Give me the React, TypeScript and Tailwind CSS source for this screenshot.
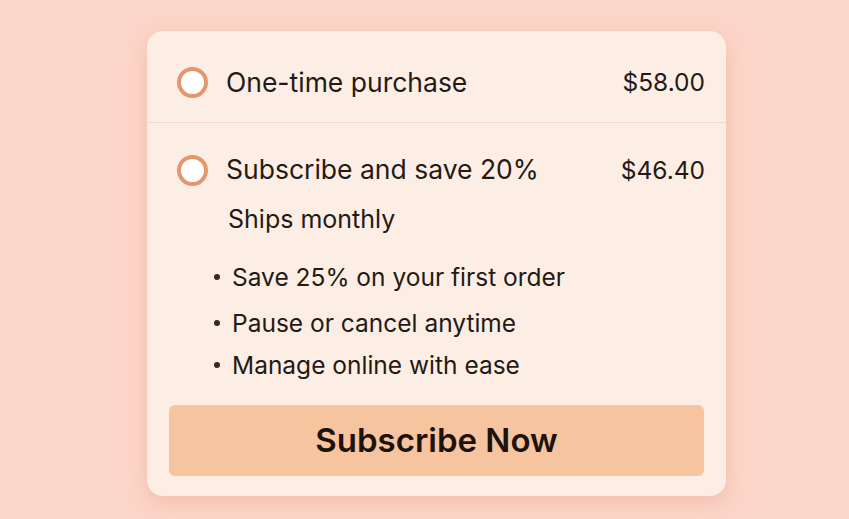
export default function App() {
  const perks = [
    { text: "Save 25% on your first order", gap: "mt-0" },
    { text: "Pause or cancel anytime", gap: "mt-[14px]" },
    { text: "Manage online with ease", gap: "mt-[10px]" },
  ];
  return (
    <div className="w-[849px] h-[519px] bg-[#fcd6c9] flex justify-center pt-[31px]" style={{ fontFamily: "Inter, 'Noto Sans', sans-serif" }}>
      <div className="w-[579px] h-[465px] ml-[24px] rounded-[16px] bg-[#fdeee5] shadow-[0_6px_20px_rgba(225,140,115,0.35)] flex flex-col text-[#231a15]">
        {/* One-time */}
        <div className="h-[92px] flex items-center pt-[12px] pl-[30px] pr-[21px] border-b border-[#f8d6c8]">
          <span className="w-[31px] h-[31px] rounded-full border-[4px] border-[#e5966c] bg-white shrink-0" />
          <span className="ml-[18px] text-[26.5px]">One-time purchase</span>
          <span className="ml-auto text-[24.5px]">$58.00</span>
        </div>
        {/* Subscribe */}
        <div className="flex flex-col pl-[30px] pr-[21px] pt-[31px]">
          <div className="flex items-center h-[32px]">
            <span className="w-[31px] h-[31px] rounded-full border-[4px] border-[#e5966c] bg-white shrink-0" />
            <span className="ml-[18px] text-[26.5px]">Subscribe and save 20%</span>
            <span className="ml-auto text-[24.5px]">$46.40</span>
          </div>
          <div className="ml-[51px] mt-[17px] text-[25px] leading-[32px]">Ships monthly</div>
          <ul className="ml-[37px] mt-[26px] flex flex-col">
            {perks.map((p) => (
              <li key={p.text} className={`flex items-center h-[32px] text-[24.5px] ${p.gap}`}>
                <span className="w-[6px] h-[6px] rounded-full bg-[#3a2a22] mr-[12px]" />
                {p.text}
              </li>
            ))}
          </ul>
        </div>
        <button className="mx-[22px] mt-[24px] h-[71px] rounded-[6px] bg-[#f7c4a0] text-[33px] font-semibold text-[#1e120c]">
          Subscribe Now
        </button>
      </div>
    </div>
  );
}
